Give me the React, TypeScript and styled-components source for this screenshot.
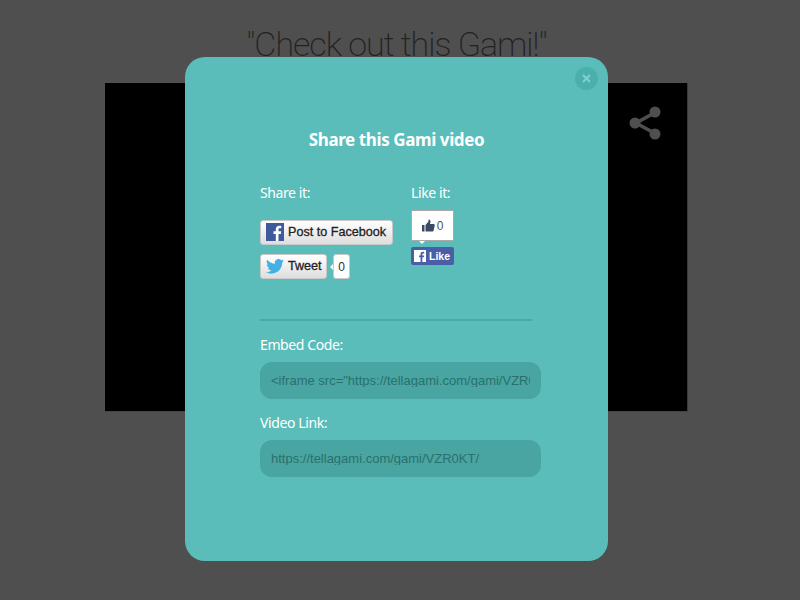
import React from "react"
import styled, { createGlobalStyle } from "styled-components"

const GlobalStyle = createGlobalStyle`
  html, body {
    margin: 0;
    padding: 0;
    background: #4f4f4f;
  }
`
const Page = styled.div`
  position: relative;
  width: 800px;
  height: 600px;
  overflow: hidden;
  background: #4f4f4f;
`
const Backdrop = styled.div`
  display: flex;
  flex-direction: column;
  align-items: flex-start;
  padding: 0 112px 0 105px;
`
const Title = styled.h1`
  width: 100%;
  height: 83px;
  margin: 0;
  padding-top: 22px;
  box-sizing: border-box;
  font: 200 34px/44px Roboto, Lato, sans-serif;
  letter-spacing: -1px;
  color: #222;
  text-align: center;
`
const Video = styled.div`
  width: 100%;
  height: 329px;
  display: flex;
  justify-content: flex-end;
  background: #000;
  border-right: 1px solid #3a3a3a;
  border-bottom: 1px solid #444;
  box-sizing: border-box;
  padding: 23px 25px 0 0;
`
const Modal = styled.div`
  position: absolute;
  left: 185px;
  top: 57px;
  width: 423px;
  height: 504px;
  box-sizing: border-box;
  padding: 72px 67px 0 75px;
  background: #5abdb9;
  border-radius: 20px;
  font-family: "Noto Sans", "Open Sans", sans-serif;
  color: #fff;
`
const Close = styled.button`
  position: absolute;
  top: 10px;
  right: 10px;
  width: 23px;
  height: 23px;
  padding: 0;
  display: flex;
  align-items: center;
  justify-content: center;
  border: 0;
  border-radius: 50%;
  background: #4bb0ac;
  color: #85cfcb;
`
const Heading = styled.h2`
  margin: 0 8px 0 0;
  font-size: 17px;
  line-height: 22px;
  font-weight: 700;
  text-align: center;
  letter-spacing: -0.4px;
`
const SocialRow = styled.div`
  display: flex;
  margin-top: 33px;
  height: 135px;
  border-bottom: 2px solid #4ba8a4;
  width: 272px;
`
const ShareColumn = styled.div`
  display: flex;
  flex-direction: column;
  align-items: flex-start;
  width: 151px;
`
const LikeColumn = styled.div`
  display: flex;
  flex-direction: column;
  align-items: flex-start;
`
const Label = styled.div`
  font-size: 14px;
  line-height: 18px;
  letter-spacing: -0.4px;
`
const SocialButton = styled.div<{ $width: number; $top: number }>`
  display: flex;
  align-items: center;
  gap: 4px;
  box-sizing: border-box;
  width: ${p => p.$width}px;
  height: 25px;
  margin-top: ${p => p.$top}px;
  padding: 0 0 1px 5px;
  border: 1px solid #c9c9c9;
  border-radius: 3px;
  background: linear-gradient(to bottom, #ffffff, #dedede);
  font: 400 12.6px/1 "Liberation Sans", Arial, sans-serif;
  -webkit-text-stroke: 0.3px #222;
  white-space: nowrap;
  color: #222;
`
const TweetRow = styled.div`
  display: flex;
  align-items: center;
  gap: 6px;
  margin-top: 9px;
`
const TweetCount = styled.div`
  position: relative;
  display: flex;
  align-items: center;
  justify-content: center;
  box-sizing: border-box;
  width: 17px;
  height: 25px;
  background: #fff;
  border: 1px solid #c9c9c9;
  border-radius: 3px;
  font: 400 12px/1 "Liberation Sans", Arial, sans-serif;
  color: #333;
  &::before {
    content: "";
    position: absolute;
    left: -4px;
    top: 9px;
    border: 3px solid transparent;
    border-left: 0;
    border-right: 3px solid #fff;
  }
`
const LikeBox = styled.div`
  position: relative;
  display: flex;
  align-items: center;
  justify-content: center;
  gap: 2px;
  box-sizing: border-box;
  width: 43px;
  height: 31px;
  margin-top: 8px;
  background: #fff;
  border: 1px solid #aaa;
  font: 400 12px/1 "Liberation Sans", Arial, sans-serif;
  color: #555;
  &::after {
    content: "";
    position: absolute;
    left: 7px;
    bottom: -4px;
    border: 3px solid transparent;
    border-bottom: 0;
    border-top: 3px solid #fff;
  }
`
const LikeButton = styled.div`
  display: flex;
  align-items: center;
  gap: 3px;
  box-sizing: border-box;
  width: 43px;
  height: 18px;
  margin-top: 6px;
  padding-left: 3px;
  background: #4a5ea8;
  border-radius: 2px;
  font: 700 10.5px/1 "Liberation Sans", Arial, sans-serif;
  color: #fff;
`
const Field = styled.div`
  margin-top: 15px;
`
const CodeBox = styled.div`
  box-sizing: border-box;
  width: 281px;
  height: 37px;
  margin-top: 8px;
  padding: 0 0 0 11px;
  display: flex;
  align-items: center;
  border-radius: 12px;
  background: #48a5a1;
  font: 400 13px/1 "Liberation Sans", Arial, sans-serif;
  color: #2a706e;
`
const CodeText = styled.span`
  display: block;
  width: 259px;
  overflow: hidden;
  white-space: nowrap;
`

const FacebookMark = ({ size, box, letter }: { size: number; box: string; letter: string }) => (
  <svg width={size} height={size} viewBox="0 0 18 18">
    <rect width="18" height="18" fill={box} />
    <path d="M12.5 18v-7h2.300l.4-2.700h-2.700V6.600c0-.8.3-1.300 1.400-1.300h1.400V2.900c-.3 0-1.100-.1-2-.1-2.100 0-3.500 1.200-3.500 3.500v2H7.500V11h2.300v7z" fill={letter} />
  </svg>
)
const TwitterBird = () => (
  <svg width="18" height="15" viewBox="0 0 24 20">
    <path d="M24 2.400c-.9.4-1.800.7-2.800.8 1-.6 1.800-1.600 2.200-2.700-1 .6-2 1-3.100 1.200A4.900 4.900 0 0 0 11.900 6.200 14 14 0 0 1 1.700.9a4.900 4.900 0 0 0 1.500 6.600c-.8 0-1.600-.2-2.200-.6 0 2.400 1.700 4.400 3.900 4.900-.7.2-1.500.2-2.200.1.600 2 2.400 3.400 4.600 3.400A9.900 9.900 0 0 1 0 17.300 14 14 0 0 0 7.500 19.500c9.100 0 14.300-7.700 14-14.600 1-.7 1.800-1.500 2.500-2.500z" fill="#45b0e3" />
  </svg>
)
const ThumbIcon = () => (
  <svg width="13" height="13" viewBox="0 0 13 13">
    <rect x="0" y="6" width="2.500" height="6.500" fill="#3c4a66" />
    <path d="M3.500 6 6.500 2.500V.5c1.300 0 2 .9 2 2L8 5h3.500c.9 0 1.400.7 1.200 1.500l-1 4.800c-.2.800-.7 1.200-1.500 1.200H3.500z" fill="#3c4a66" />
  </svg>
)
const ShareGlyph = () => (
  <svg width="34" height="34" viewBox="0 0 34 34">
    <path d="M28 6 8 17l20 11" fill="none" stroke="#4f4f4f" strokeWidth="3.500" />
    <circle cx="7" cy="17" r="5.500" fill="#4f4f4f" />
    <circle cx="27" cy="6" r="5.500" fill="#4f4f4f" />
    <circle cx="27" cy="28" r="5.500" fill="#4f4f4f" />
  </svg>
)
const CloseGlyph = () => (
  <svg width="9" height="9" viewBox="0 0 9 9">
    <path d="M1 1l7 7M8 1 1 8" stroke="currentColor" strokeWidth="2" />
  </svg>
)

export default function App() {
  return (
    <Page>
      <GlobalStyle />
      <Backdrop>
        <Title>"Check out this Gami!"</Title>
        <Video>
          <ShareGlyph />
        </Video>
      </Backdrop>
      <Modal>
        <Close aria-label="Close">
          <CloseGlyph />
        </Close>
        <Heading>Share this Gami video</Heading>
        <SocialRow>
          <ShareColumn>
            <Label>Share it:</Label>
            <SocialButton $width={133} $top={18}>
              <FacebookMark size={18} box="#3f5a9c" letter="#fff" />
              Post to Facebook
            </SocialButton>
            <TweetRow>
              <SocialButton $width={67} $top={0}>
                <TwitterBird />
                Tweet
              </SocialButton>
              <TweetCount>0</TweetCount>
            </TweetRow>
          </ShareColumn>
          <LikeColumn>
            <Label>Like it:</Label>
            <LikeBox>
              <ThumbIcon />0
            </LikeBox>
            <LikeButton>
              <FacebookMark size={12} box="#fff" letter="#4a5ea8" />
              Like
            </LikeButton>
          </LikeColumn>
        </SocialRow>
        <Field>
          <Label>Embed Code:</Label>
          <CodeBox>
            <CodeText>&lt;iframe src="https://tellagami.com/gami/VZR0KT/embed"&gt;</CodeText>
          </CodeBox>
        </Field>
        <Field>
          <Label>Video Link:</Label>
          <CodeBox>
            <CodeText>https://tellagami.com/gami/VZR0KT/</CodeText>
          </CodeBox>
        </Field>
      </Modal>
    </Page>
  )
}
